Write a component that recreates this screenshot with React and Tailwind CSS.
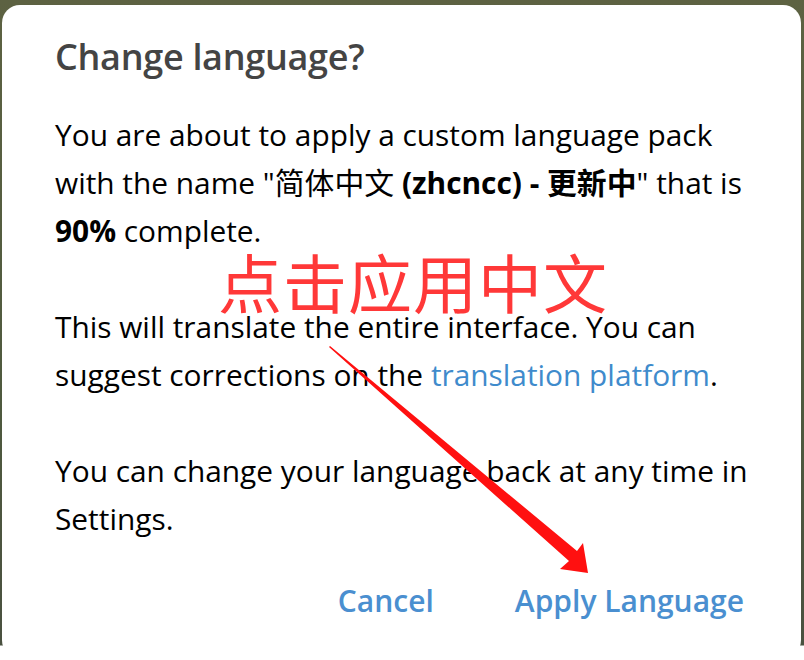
export default function App() {
  return (
    <div
      className="relative w-[804px] h-[660px] overflow-hidden bg-[linear-gradient(to_bottom,#5d6242_0px,#4f5a3f_400px,#4a5140_645px,#ffffff_646px)] pt-[5px] pl-[2px] pr-[3px]"
      style={{ fontFamily: '"Open Sans", "Noto Sans CJK SC", sans-serif' }}
    >
      <div className="relative bg-white rounded-[18px] h-[653px] pl-[53px] pr-[44px] pt-[28px]">
        <h1 className="text-[36px] leading-[48px] font-semibold text-[#444444] tracking-[-0.3px]">
          Change language?
        </h1>
        <div className="mt-[30px] text-[29.85px] leading-[48px] text-black">
          <p>
            You are about to apply a custom language pack with the name "简体中文{" "}
            <span className="font-bold">(zhcncc) - 更新中</span>" that is{" "}
            <span className="font-bold">90%</span> complete.
          </p>
          <p className="mt-[48px]">
            This will translate the entire interface. You can suggest corrections on the{" "}
            <span className="text-[#3f8bcc]">translation platform</span>.
          </p>
          <p className="mt-[48px]">
            You can change your language back at any time in Settings.
          </p>
        </div>
        <div className="mt-[34px] flex justify-end gap-[81px] pr-[13px] text-[30px] leading-[48px] font-semibold text-[#4a8fd0]">
          <button className="font-semibold">Cancel</button>
          <button className="font-semibold">Apply Language</button>
        </div>

        <div className="absolute left-[203px] top-[240px] w-[416px] h-[70px] flex items-center justify-center pointer-events-none">
          <span className="text-[64px] leading-none text-[#ff3838] tracking-[1px]" style={{ fontFamily: '"Noto Sans CJK SC", sans-serif' }}>
            点击应用中文
          </span>
        </div>

        <svg className="absolute left-0 top-0 pointer-events-none" width="799" height="653" viewBox="0 0 799 653">
          <polygon
            points="328,341 575,546 581,538 586,568 558,564 567,556 327,342"
            fill="#ff1010"
          />
        </svg>
      </div>
    </div>
  );
}
